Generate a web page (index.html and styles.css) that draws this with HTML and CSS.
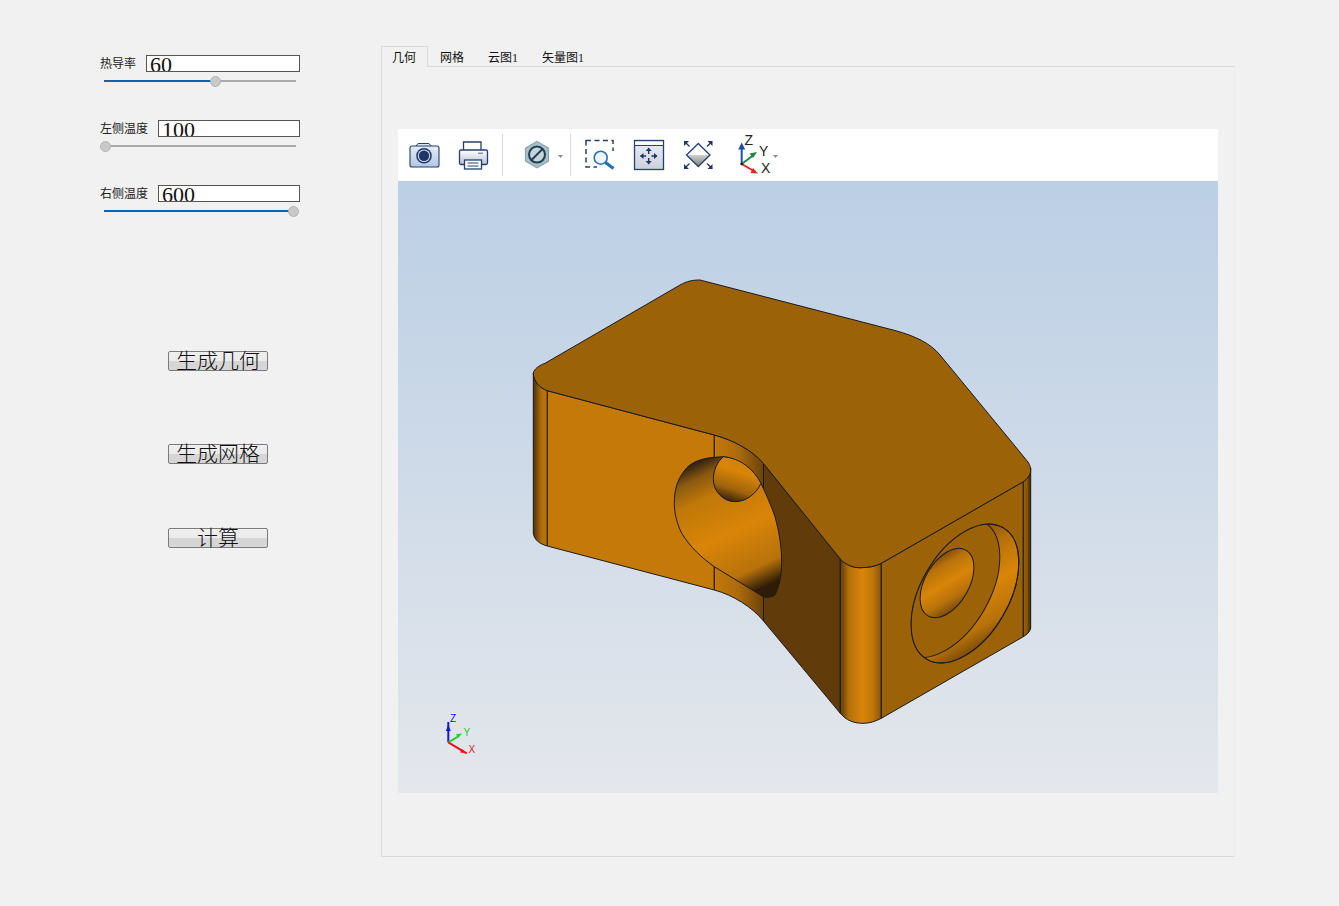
FILE: index.html
```html
<!DOCTYPE html>
<html lang="zh">
<head>
<meta charset="utf-8">
<title>热传导</title>
<link rel="stylesheet" href="styles.css">
</head>
<body>
<div class="app">
  <aside class="side">
    <div class="param">
      <div class="row"><label class="lbl">热导率</label><input class="num" readonly value="60"></div>
      <div class="slider"><div class="fill" style="width:58%"></div><div class="knob" style="left:58%"></div></div>
    </div>
    <div class="param">
      <div class="row"><label class="lbl">左侧温度</label><input class="num" readonly value="100"></div>
      <div class="slider"><div class="knob" style="left:0.4%"></div></div>
    </div>
    <div class="param">
      <div class="row"><label class="lbl">右侧温度</label><input class="num" readonly value="600"></div>
      <div class="slider"><div class="fill" style="width:98.2%"></div><div class="knob" style="left:98.2%"></div></div>
    </div>
    <div class="actions">
      <button class="btn btn-geo">生成几何</button>
      <button class="btn btn-mesh">生成网格</button>
      <button class="btn btn-calc">计算</button>
    </div>
  </aside>
  <main class="tabs">
    <nav class="tabbar">
      <div class="tab tab-on">几何</div>
      <div class="tab">网格</div>
      <div class="tab">云图1</div>
      <div class="tab">矢量图1</div>
    </nav>
    <section class="pane">
      <div class="toolbar">
        <svg class="ic i-cam" width="32" height="32" viewBox="0 0 32 32">
          <defs><linearGradient id="gc" x1="0" y1="0" x2="0" y2="1"><stop offset="0" stop-color="#e3ebf6"/><stop offset="1" stop-color="#b4c7e2"/></linearGradient></defs>
          <path d="M8 7l2-2.500h11L23 7" fill="#dfe7f3" stroke="#24406f" stroke-width="1"/>
          <rect x="2" y="7" width="29" height="21" rx="2" fill="url(#gc)" stroke="#24406f" stroke-width="1.100"/>
          <circle cx="16" cy="16.700" r="7.800" fill="#1d3566"/>
          <circle cx="16" cy="16.700" r="6.300" fill="#cfdcee"/>
          <circle cx="16" cy="16.700" r="5.200" fill="#1d3566"/>
          <rect x="26" y="9.500" width="2.500" height="1.500" fill="#fff"/>
        </svg>
        <svg class="ic i-print" width="32" height="32" viewBox="0 0 32 32">
          <defs><linearGradient id="gp" x1="0" y1="0" x2="0" y2="1"><stop offset="0" stop-color="#fff"/><stop offset="1" stop-color="#b9c2d2"/></linearGradient></defs>
          <path d="M6.500 11V3h17.500v8" fill="#fff" stroke="#24406f" stroke-width="1.300"/>
          <rect x="2.500" y="11" width="28" height="14.500" rx="1.500" fill="url(#gp)" stroke="#24406f" stroke-width="1.300"/>
          <rect x="7.500" y="21" width="17" height="9" fill="#fff" stroke="#24406f" stroke-width="1.300"/>
          <path d="M10.500 24h11M10.500 27h11" stroke="#24406f" stroke-width="1"/>
          <rect x="21" y="13.500" width="5" height="1.500" fill="#8795ad"/>
        </svg>
        <div class="sep sep-a"></div>
        <svg class="ic i-hex" width="32" height="32" viewBox="0 0 32 32">
          <path d="M16 2.500l11.500 6.600v13L16 28.700 4.500 22.100v-13z" fill="#a9c0c8" stroke="#8ba7b0" stroke-width="1.200"/>
          <circle cx="16" cy="15.600" r="8" fill="#c5d5da" stroke="#1f3d57" stroke-width="2"/>
          <path d="M10.500 21L21.500 10" stroke="#1f3d57" stroke-width="2"/>
        </svg>
        <svg class="drop d-hex" width="5" height="3" viewBox="0 0 5 3"><path d="M0 0h5L2.500 3z" fill="#8a8a8a"/></svg>
        <div class="sep sep-b"></div>
        <svg class="ic i-zoom" width="32" height="32" viewBox="0 0 32 32">
          <rect x="2" y="1.500" width="27" height="26.500" fill="none" stroke="#24406f" stroke-width="1.500" stroke-dasharray="5 3.500"/>
          <rect x="13" y="12" width="18" height="19" fill="#fff"/>
          <circle cx="16.700" cy="18.700" r="6.500" fill="#eef4fa" stroke="#2672b4" stroke-width="1.600"/>
          <path d="M21.500 23.500L29.500 29.500" stroke="#1f6fb5" stroke-width="3"/>
        </svg>
        <svg class="ic i-fit" width="32" height="32" viewBox="0 0 32 32">
          <defs><linearGradient id="gf" x1="0" y1="0" x2="0" y2="1"><stop offset="0" stop-color="#eceef3"/><stop offset="1" stop-color="#ccd0db"/></linearGradient></defs>
          <rect x="1.500" y="1.500" width="29" height="29" fill="url(#gf)" stroke="#24406f" stroke-width="1.300"/>
          <rect x="2.200" y="3" width="27.600" height="3" fill="#fff"/>
          <path d="M2 6.500h28" stroke="#24406f" stroke-width="1"/>
          <path d="M15.700 10.500v4.500M15.700 19v4.500M7.500 17h5.500M18.500 17h5.500" stroke="#1f3566" stroke-width="1.400"/>
          <path d="M15.700 8.500l-3 3.500h6zM15.700 25.500l-3-3.500h6zM7 17l3.500-3v6zM24.500 17l-3.500-3v6z" fill="#1f3566"/>
        </svg>
        <svg class="ic i-dia" width="32" height="32" viewBox="0 0 32 32">
          <defs><linearGradient id="gd" x1="0" y1="0" x2="0" y2="1"><stop offset="0" stop-color="#d0d0d0"/><stop offset="1" stop-color="#7e7e7e"/></linearGradient></defs>
          <path d="M16.300 4.500L28 16H4.500z" fill="#fbfbfb"/>
          <path d="M4.500 16H28L16.300 27.500z" fill="url(#gd)"/>
          <path d="M16.300 4.500L28 16 16.300 27.500 4.500 16z" fill="none" stroke="#24406f" stroke-width="1.300"/>
          <path d="M2.500 2.500l5 5M30 2.500l-5 5M2.500 29.500l5-5M30 29.500l-5-5" stroke="#1f3566" stroke-width="1.300"/>
          <path d="M2 2h5L2 7zM30.500 2h-5l5 5zM2 30h5L2 25zM30.500 30h-5l5-5z" fill="#1f3566"/>
        </svg>
        <svg class="ic i-axes" width="36" height="44" viewBox="0 0 36 44">
          <path d="M5.700 31V14" stroke="#1e4fa8" stroke-width="2"/>
          <path d="M5.700 9.500l-3.500 7h7z" fill="#1e4fa8"/>
          <path d="M5.700 31L17 22.500" stroke="#1d8a3c" stroke-width="2"/>
          <path d="M21 19l-7.500 1.500 3.500 4.500z" fill="#1d8a3c"/>
          <path d="M5.700 31L17 37.500" stroke="#e62020" stroke-width="2"/>
          <path d="M22 40.500l-7.500-.5 2.500-5z" fill="#e62020"/>
          <circle cx="5.700" cy="31" r="1.300" fill="#111"/>
          <text class="ax" x="8.500" y="12">Z</text>
          <text class="ax" x="23" y="23">Y</text>
          <text class="ax" x="25" y="40">X</text>
        </svg>
        <svg class="drop d-axes" width="5" height="3" viewBox="0 0 5 3"><path d="M0 0h5L2.500 3z" fill="#8a8a8a"/></svg>
      </div>
      <svg class="scene" width="820" height="612" viewBox="398 181 820 612">
        <defs>
          <linearGradient id="bg" x1="0" y1="0" x2="0" y2="1"><stop offset="0" stop-color="#bbcfe5"/><stop offset="1" stop-color="#e4e7ec"/></linearGradient>
          <linearGradient id="gl" gradientUnits="userSpaceOnUse" x1="533" y1="0" x2="548" y2="0"><stop offset="0" stop-color="#4a2e0a"/><stop offset=".55" stop-color="#b06c0a"/><stop offset="1" stop-color="#c47909"/></linearGradient>
          <linearGradient id="gfil" gradientUnits="userSpaceOnUse" x1="714" y1="0" x2="764" y2="0"><stop offset="0" stop-color="#c47909"/><stop offset=".5" stop-color="#aa6a0b"/><stop offset="1" stop-color="#6a420b"/></linearGradient>
          <linearGradient id="gcor" gradientUnits="userSpaceOnUse" x1="840" y1="0" x2="881" y2="0"><stop offset="0" stop-color="#5a380a"/><stop offset=".22" stop-color="#b5700a"/><stop offset=".55" stop-color="#d98508"/><stop offset=".8" stop-color="#bd760a"/><stop offset="1" stop-color="#8a560a"/></linearGradient>
          <linearGradient id="gr" gradientUnits="userSpaceOnUse" x1="1023" y1="0" x2="1031" y2="0"><stop offset="0" stop-color="#9b6208"/><stop offset=".5" stop-color="#8a5608"/><stop offset="1" stop-color="#2e1c08"/></linearGradient>
          <linearGradient id="gh1" gradientUnits="userSpaceOnUse" x1="698" y1="463" x2="758" y2="590"><stop offset="0" stop-color="#3a2610"/><stop offset=".1" stop-color="#8a5a10"/><stop offset=".25" stop-color="#c07809"/><stop offset=".55" stop-color="#d98508"/><stop offset=".85" stop-color="#b8720a"/><stop offset="1" stop-color="#2e1c08"/></linearGradient>
          <linearGradient id="gh2" gradientUnits="userSpaceOnUse" x1="728" y1="502" x2="742" y2="458"><stop offset="0" stop-color="#2e1c08"/><stop offset=".3" stop-color="#a0640c"/><stop offset=".7" stop-color="#d98508"/><stop offset="1" stop-color="#d08008"/></linearGradient>
          <linearGradient id="gh3" gradientUnits="userSpaceOnUse" x1="930" y1="617" x2="967" y2="550"><stop offset="0" stop-color="#2e1c08"/><stop offset=".12" stop-color="#6e4510"/><stop offset=".3" stop-color="#b8720a"/><stop offset=".5" stop-color="#d98508"/><stop offset=".72" stop-color="#b8720a"/><stop offset=".88" stop-color="#6e4510"/><stop offset="1" stop-color="#3c2508"/></linearGradient>
          <linearGradient id="gw" gradientUnits="userSpaceOnUse" x1="1015" y1="525" x2="935" y2="665"><stop offset="0" stop-color="#3a2610"/><stop offset=".15" stop-color="#6e4510"/><stop offset=".35" stop-color="#b8720a"/><stop offset=".55" stop-color="#d98508"/><stop offset=".75" stop-color="#b8720a"/><stop offset="1" stop-color="#2e1c08"/></linearGradient>
          <clipPath id="co"><ellipse cx="965" cy="593.500" rx="76" ry="44" transform="rotate(-60 965 593.500)"/></clipPath>
        </defs>
        <rect x="398" y="181" width="820" height="612" fill="url(#bg)"/>
        <g stroke="#1b1b1b" stroke-width="1">
          <path d="M533.300 373.300V533C534 540 540 544 547.300 546V390.700C540 388 534 382 533.300 373.300Z" fill="url(#gl)"/>
          <path d="M547.300 390.700L714.300 435V590L547.300 546Z" fill="#c47909"/>
          <path d="M714.300 435C733 440 752 450 763.500 463.500V621C752 607 733 595 714.300 590Z" fill="url(#gfil)"/>
          <path d="M763.500 463.500L840.300 559V713.300L763.500 621Z" fill="#613b0a"/>
          <path d="M840.300 559C846 565 853 567.700 860 567.700C868 567.700 875 566.500 881.300 563.300V718.300C875 721.500 870 723.300 863 723.300C853 723.300 846 720 840.300 713.300Z" fill="url(#gcor)"/>
          <path d="M881.300 563.300L1023.300 481.700V636.700L881.300 718.300Z" fill="#9b6208"/>
          <path d="M1023.300 481.700C1027 479 1030 476 1030.700 468V628C1030 632 1027 634.500 1023.300 636.700Z" fill="url(#gr)"/>
          <path d="M533.300 373.300C534 369 539 365.500 545 363.300L680 285C687 281 693 280 700 280L895 330.500C915 336 930 343 940 355L1010 440L1028 462C1030 465 1030.700 468 1030.700 470C1030.700 475 1027 479 1023.300 481.700L881.300 563.300C875 566.500 868 567.700 860 567.700C853 567.700 846 565 840.300 559L763.500 463.500C752 450 733 440 714.300 435L547.300 390.700C540 388 534 382 533.300 373.300Z" fill="#9b6208"/>
          <path d="M714.300 457.300C700 458.500 690 463 685 470C677 480 674.300 490 674.300 503.300C674.300 513 677 524 681.700 533.300C690 547 702 558 714.300 566.700L763.300 596.700C768 598 772 597 775 595C779 587 781.700 575 781.700 563.300C781.700 547 779 531 775 516.700C771 505 766 494 761 483.300C750 468 737 458 723.300 456.700Z" fill="url(#gh1)"/>
          <path d="M723.300 456.700C717 462 713.300 471 713.300 479.300C713.300 491 723 501.700 735 501.700C746 501.700 756 494 761 483.300C754 470 741 458 723.300 456.700Z" fill="url(#gh2)"/>
          <ellipse cx="965" cy="593.500" rx="76" ry="44" transform="rotate(-60 965 593.500)" fill="url(#gw)"/>
          <g clip-path="url(#co)">
            <ellipse cx="946" cy="588" rx="76" ry="44" transform="rotate(-60 946 588)" fill="#9b6208"/>
          </g>
          <ellipse cx="965" cy="593.500" rx="76" ry="44" transform="rotate(-60 965 593.500)" fill="none"/>
          <ellipse cx="947" cy="583" rx="38" ry="22" transform="rotate(-60 947 583)" fill="url(#gh3)"/>
        </g>
        <path d="M448.300 742.300V722" stroke="#1414e6" stroke-width="2"/>
        <path d="M448.300 725l-2.500 6h5z" fill="#1414e6"/>
        <path d="M448.300 742.300L459 736" stroke="#22cc22" stroke-width="2"/>
        <path d="M462 733.500l-6 .8 2.200 3.400z" fill="#22cc22"/>
        <path d="M448.300 742.300L466.700 753.300" stroke="#e81414" stroke-width="2"/>
        <path d="M466 753l-6-.5 2-3.500z" fill="#e81414"/>
        <text class="tri tz" x="450" y="722">Z</text>
        <text class="tri ty" x="463.500" y="736">Y</text>
        <text class="tri tx" x="468.500" y="753">X</text>
      </svg>
    </section>
  </main>
</div>
</body>
</html>
```
FILE: styles.css
```css
* { box-sizing: border-box; }
html, body { margin: 0; height: 100%; }
body {
  background: #f1f1f1;
  font-family: "Liberation Serif", "Noto Sans CJK SC", serif;
  color: #111;
  overflow: hidden;
}
.app { display: flex; align-items: flex-start; }

/* left column */
.side { width: 381px; flex: none; padding: 55px 0 0 100px; }
.param { width: 200px; height: 65px; }
.row { display: flex; align-items: flex-start; gap: 10px; height: 17px; }
.lbl {
  font: 12px/15px "Noto Sans CJK SC", sans-serif;
  white-space: nowrap;
  color: #222;
}
.num {
  flex: 1;
  min-width: 0;
  height: 17px;
  padding: 2px 3px 0;
  border: 1px solid #555;
  border-radius: 0;
  background: #fff;
  outline: 0;
  font: 22px/22px "Liberation Serif", serif;
  color: #111;
}
.slider {
  position: relative;
  width: 192px;
  height: 2px;
  margin: 8px 0 0 4px;
  background: #aaa;
}
.fill { height: 2px; background: #0a64b4; }
.knob {
  position: absolute;
  top: -4px;
  width: 11px;
  height: 11px;
  margin-left: -5px;
  border-radius: 50%;
  background: #c9c9c9;
  border: 1px solid #b4b4b4;
}
.actions { display: flex; flex-direction: column; align-items: flex-start; padding-left: 68px; }
.btn {
  width: 100px;
  height: 20px;
  padding: 0 0 4px;
  border: 1px solid #7b7b7b;
  border-radius: 2px;
  background: linear-gradient(#efefef 0, #ebebeb 50%, #d6d6d6 52%, #d6d6d6 100%);
  font: 300 21px/14px "Noto Sans CJK SC", sans-serif;
  color: #111;
  white-space: nowrap;
}
.btn-geo { margin-top: 101px; }
.btn-mesh { margin-top: 73px; }
.btn-calc { margin-top: 64px; }

/* tab widget */
.tabs { width: 854px; margin-top: 46px; flex: none; }
.tabbar { display: flex; height: 20px; }
.tab {
  height: 20px;
  padding: 4px 12px 0;
  font-size: 12px;
  line-height: 16px;
  color: #111;
  white-space: nowrap;
}
.tab-on {
  position: relative;
  height: 21px;
  padding: 3px 11px 0 10px;
  background: #f1f1f1;
  border: 1px solid #d9d9d9;
  border-bottom: 0;
}
.pane {
  height: 791px;
  padding: 62px 0 0 16px;
  border: 1px solid #d9d9d9;
  border-right-color: #ececec;
}

/* viewer */
.toolbar {
  display: flex;
  align-items: center;
  width: 820px;
  height: 52px;
  padding-left: 10px;
  background: #fff;
}
.ic { flex: none; display: block; }
.ax { font: 14px "Liberation Sans", sans-serif; fill: #222; }
.i-print { margin-left: 17px; }
.sep { flex: none; width: 1px; height: 42px; background: #dcdcdc; }
.sep-a { margin-left: 13px; }
.i-hex { margin-left: 18px; }
.drop { flex: none; display: block; }
.d-hex { margin: 3px 0 0 5px; }
.sep-b { margin-left: 7px; }
.i-zoom { margin-left: 13px; }
.i-fit { margin-left: 17px; }
.i-dia { margin-left: 17px; }
.i-axes { margin-left: 22px; }
.d-axes { margin: 3px 0 0 1px; }
.scene { display: block; }
.tri { font: 10px "Liberation Sans", sans-serif; }
.tz { fill: #1414e6; }
.ty { fill: #22cc22; }
.tx { fill: #e81414; }
```
